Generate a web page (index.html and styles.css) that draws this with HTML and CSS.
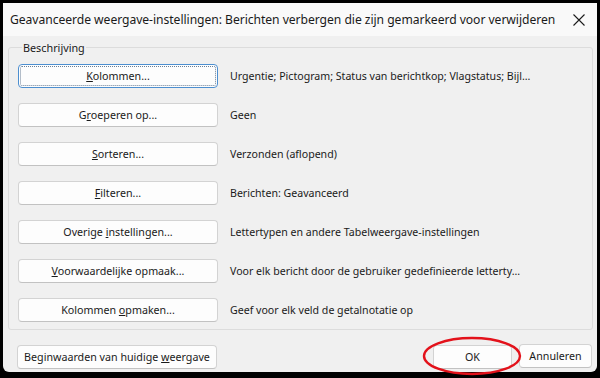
FILE: index.html
```html
<!DOCTYPE html>
<html lang="nl">
<head>
<meta charset="utf-8">
<title>Geavanceerde weergave-instellingen</title>
<link rel="stylesheet" href="styles.css">
</head>
<body>
<div class="frame">
  <div class="dialog">
    <div class="titlebar">
      <span class="title">Geavanceerde weergave-instellingen: Berichten verbergen die zijn gemarkeerd voor verwijderen</span>
      <svg class="close" width="12" height="12" viewBox="0 0 12 12"><path d="M0.5 0.5 L11.5 11.5 M11.5 0.5 L0.5 11.5" stroke="#1b1b1b" stroke-width="1.1" fill="none"/></svg>
    </div>
    <div class="body">
      <fieldset class="group">
        <legend>Beschrijving</legend>
        <div class="row"><button class="btn focus"><u>K</u>olommen...</button><span class="desc">Urgentie; Pictogram; Status van berichtkop; Vlagstatus; Bijl...</span></div>
        <div class="row"><button class="btn">G<u>r</u>oeperen op...</button><span class="desc">Geen</span></div>
        <div class="row"><button class="btn"><u>S</u>orteren...</button><span class="desc">Verzonden (aflopend)</span></div>
        <div class="row"><button class="btn"><u>F</u>ilteren...</button><span class="desc">Berichten: Geavanceerd</span></div>
        <div class="row"><button class="btn">Overige <u>i</u>nstellingen...</button><span class="desc">Lettertypen en andere Tabelweergave-instellingen</span></div>
        <div class="row"><button class="btn"><u>V</u>oorwaardelijke opmaak...</button><span class="desc">Voor elk bericht door de gebruiker gedefinieerde letterty...</span></div>
        <div class="row"><button class="btn">Kolommen <u>o</u>pmaken...</button><span class="desc">Geef voor elk veld de getalnotatie op</span></div>
      </fieldset>
      <div class="footer">
        <button class="btn">Beginwaarden van huidige <u>w</u>eergave</button>
        <div class="actions">
          <div class="ok-wrap">
            <button class="btn small">OK</button>
            <svg class="ring" width="100" height="40" viewBox="0 0 100 40"><ellipse cx="50" cy="20" rx="48" ry="18" fill="none" stroke="#e3121b" stroke-width="2.4"/></svg>
          </div>
          <button class="btn small">Annuleren</button>
        </div>
      </div>
    </div>
  </div>
</div>
</body>
</html>
```
FILE: styles.css
```css
html, body {
  margin: 0;
  padding: 0;
  background: #000;
}
body {
  width: 600px;
  height: 378px;
  overflow: hidden;
  font-family: "Noto Sans", "Open Sans", sans-serif;
  color: #1a1a1a;
}
.frame {
  padding: 3px 3px 6px 3px;
  height: 378px;
  box-sizing: border-box;
}
.dialog {
  height: 100%;
  background: #f0f0f0;
  border-radius: 0 0 6px 6px;
  display: flex;
  flex-direction: column;
}
.titlebar {
  height: 33px;
  background: #f9f9f9;
  display: flex;
  align-items: center;
  justify-content: space-between;
  padding: 0 12px 0 7px;
}
.title {
  font-size: 12.15px;
  letter-spacing: -0.05px;
  white-space: nowrap;
}
.close {
  display: block;
  margin-top: 1px;
  flex: none;
}
.body {
  flex: 1;
  padding: 0 4px 0 5px;
  display: flex;
  flex-direction: column;
}
.group {
  margin: 4px 0 0 0;
  padding: 9px 9px 7px 9px;
  border: 1px solid #dcdcdc;
  border-radius: 3px;
  display: flex;
  flex-direction: column;
  gap: 15px;
  min-width: 0;
}
.group legend {
  font-size: 10.8px;
  padding: 0 1px;
  margin-left: 4px;
}
.row {
  display: flex;
  align-items: center;
  gap: 12px;
}
.btn {
  width: 200px;
  height: 24px;
  box-sizing: border-box;
  background: #fdfdfd;
  border: 1px solid #d3d3d3;
  border-bottom-color: #c2c2c2;
  border-radius: 4px;
  font-family: inherit;
  font-size: 10.7px;
  color: #1a1a1a;
  padding: 0;
  flex: none;
}
.btn.focus {
  border-color: #4d8fd0;
  outline: 1px dotted #6a7f96;
  outline-offset: -3px;
}
.desc {
  font-size: 10.6px;
  white-space: nowrap;
}
.footer {
  margin-top: 14px;
  padding-left: 9px;
  display: flex;
  align-items: center;
  justify-content: space-between;
}
.actions {
  display: flex;
  gap: 7px;
  padding-right: 1px;
}
.btn.small {
  width: 79px;
}
.actions .btn.small:last-child {
  width: 73px;
}
.ok-wrap {
  position: relative;
}
.ring {
  position: absolute;
  left: -11px;
  top: -8px;
  pointer-events: none;
}
```
